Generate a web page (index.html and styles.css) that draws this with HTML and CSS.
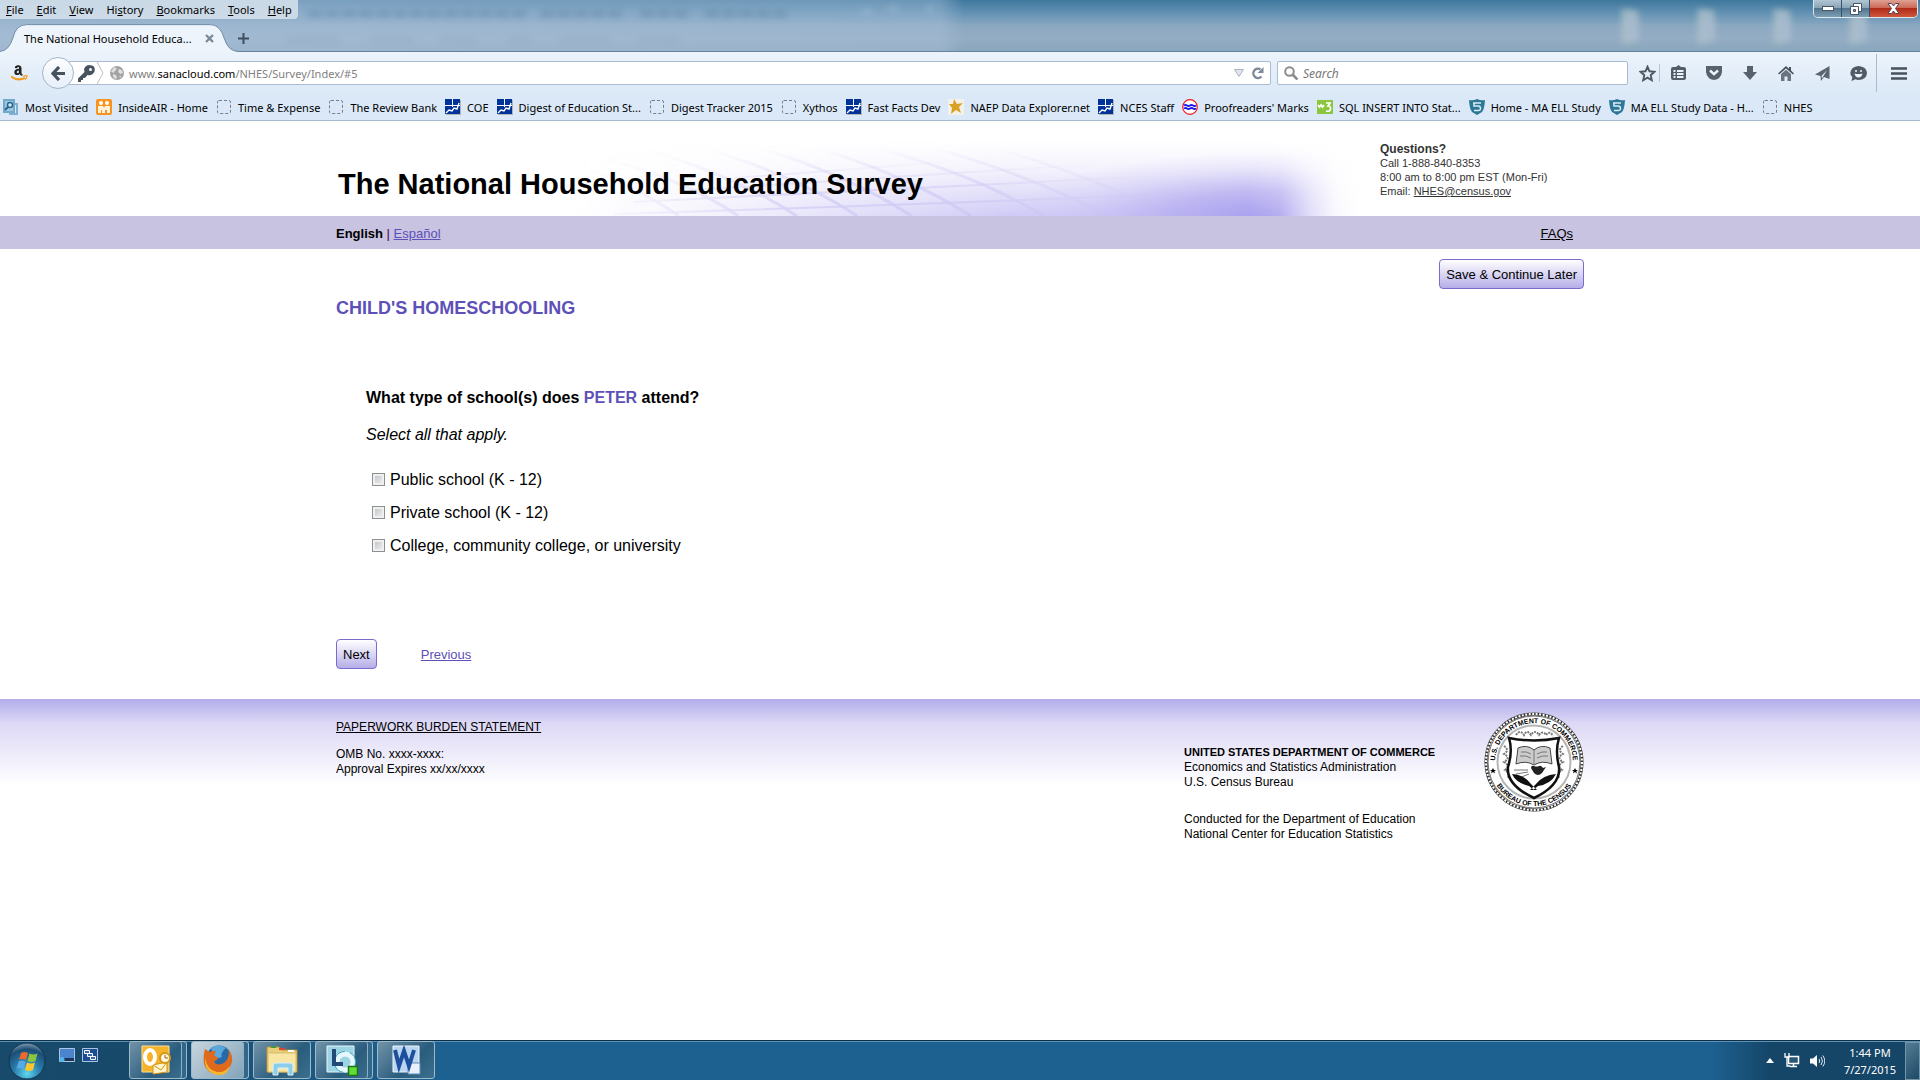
FILE: index.html
```html
<!DOCTYPE html>
<html lang="en">
<head>
  <meta charset="UTF-8" />
  <meta name="viewport" content="width=device-width, initial-scale=1" />
  <title>The National Household Education Survey</title>
  <link rel="stylesheet" href="styles.css">
</head>
<body>

<!-- Shared icons -->
<svg width="0" height="0" class="defs" aria-hidden="true">
  <symbol id="i-blank" viewBox="0 0 16 16"><rect x="1.5" y="1.5" width="13" height="13" rx="1.5" fill="none" stroke="#777f88" stroke-dasharray="3 2"/></symbol>
  <symbol id="i-chart" viewBox="0 0 16 16"><rect x="1" y="1" width="15" height="15" fill="#b4b4b4"/><rect width="15" height="15" fill="#003399"/><path d="M0 6.500h15M7.500 0v8" fill="none" stroke="#fff"/><path d="M1 14l3-3 3 1 2-3 3 1 2-6" fill="none" stroke="#fff" stroke-width="1.400"/></symbol>
  <symbol id="i-shield" viewBox="0 0 16 16"><path d="M0 1q4 1 8-1 4 2 8 1-.5 9-3 12l-5 3-5-3Q.5 10 0 1z" fill="#2f7797"/><path d="M4 4h8M5 4v3h4q2.500 0 2.500 2.300T9 11.500H5" fill="none" stroke="#d9edf5" stroke-width="1.500"/></symbol>
  <symbol id="i-folder" viewBox="0 0 28 40"><path d="M4 3l16 2v30L4 38z" fill="#b4c8c4"/><path d="M7 4l14 7v23L6 36z" fill="#adbfd0"/></symbol>
</svg>

<header class="browser">
  <div class="titlebar">
    <svg class="ghost-text" viewBox="0 0 960 50" aria-hidden="true">
      <path d="M308 14h220M540 14h85M640 14h50M705 14h85" stroke="#4c7292" stroke-width="7" stroke-dasharray="14 3"/>
      <path d="M286 40h54M370 40h44M440 40h36M508 40h24M560 40h50M640 40h40" stroke="#8da5b8" stroke-width="6"/>
      <path d="M862 12h10M888 9h10M926 9h8" stroke="#a9c4d8" stroke-width="8"/>
    </svg>
    <div class="ghost-folders" aria-hidden="true">
      <svg><use href="#i-folder"/></svg>
      <svg><use href="#i-folder"/></svg>
      <svg><use href="#i-folder"/></svg>
      <svg><use href="#i-folder"/></svg>
    </div>

    <nav class="menubar" aria-label="Menu bar">
      <button><u>F</u>ile</button>
      <button><u>E</u>dit</button>
      <button><u>V</u>iew</button>
      <button>Hi<u>s</u>tory</button>
      <button><u>B</u>ookmarks</button>
      <button><u>T</u>ools</button>
      <button><u>H</u>elp</button>
    </nav>

    <div class="tabs">
      <div class="tab">
        <svg class="tab-shape" viewBox="0 0 240 28" aria-hidden="true">
          <path d="M0 27.500Q9 27 13 14 16 .5 27 .5H212Q222 .5 226 14 230 27.500 240 27.500V28H0z" fill="#eef4fb"/>
          <path d="M0 27.500Q9 27 13 14 16 .5 27 .5H212Q222 .5 226 14 230 27.500 240 27.500" fill="none" stroke="#6f8ba6"/>
        </svg>
        <span class="tab-title">The National Household Educa...</span>
        <button class="tab-close" aria-label="Close tab"><svg width="9" height="9" viewBox="0 0 9 9"><path d="M1 1l7 7M8 1L1 8" stroke="#78899b" stroke-width="2.400"/></svg></button>
      </div>
      <button class="new-tab" aria-label="New tab"><svg width="11" height="11" viewBox="0 0 11 11"><path d="M5.500 0v11M0 5.500h11" stroke="#3e4f60" stroke-width="2"/></svg></button>
    </div>

    <div class="window-controls">
      <button class="win-min" aria-label="Minimize"><svg width="12" height="6" viewBox="0 0 12 6"><rect x=".5" y=".5" width="11" height="4" fill="#fff" stroke="#4a5566"/></svg></button>
      <button class="win-max" aria-label="Restore"><svg width="12" height="12" viewBox="0 0 12 12"><path d="M3.500.5h8v8h-8z" fill="#fff" stroke="#4a5566"/><path d="M.5 3.500h8v8h-8z" fill="#fff" stroke="#4a5566"/><path d="M3.500 6.500h2v2h-2z" fill="#7e98b0" stroke="#4a5566"/></svg></button>
      <button class="win-close" aria-label="Close"><svg width="13" height="11" viewBox="0 0 13 11"><path d="M1 .5h3.500l2 2.500 2-2.500H12L8.500 5.500l3.500 5H8.500l-2-2.500-2 2.500H1l3.500-5z" fill="#fff" stroke="#5a4650"/></svg></button>
    </div>
  </div>

  <div class="navbar">
    <a class="amazon" href="#" aria-label="Amazon">
      <svg width="18" height="18" viewBox="0 0 18 18"><path d="M12 11L10.500 9.500V4Q10 1 7 1.200 4 1.300 3.800 4l2.200.3Q6.500 2.800 7.500 3 8.500 3.200 8 4.800 3.300 5.200 3.300 8.300q.2 3 3 2.800 1.200 0 2.200-1.200l1.600 1.800zM8 6.500Q8 9.300 6.800 9.300 5.500 9 5.700 8q.1-1.400 2.300-1.500z" fill="#222"/><path d="M0 12.500q7 5 14 1.300" fill="none" stroke="#f39a1b" stroke-width="2"/><path d="M12 12.300q5-1.500 4 .5l-1.700 2.900" fill="none" stroke="#f39a1b" stroke-width="1.200"/></svg>
    </a>
    <button class="back" aria-label="Back"><svg width="14" height="15" viewBox="0 0 14 15"><path d="M8 1L2 7.500 8 14M2 7.500h12" fill="none" stroke="#46535f" stroke-width="3.200"/></svg></button>
    <div class="urlbar">
      <button class="identity" aria-label="Saved password">
        <svg width="17" height="17" viewBox="0 0 17 17"><path d="M10 0q-3 1-4 4l.5 3L0 13.500V17h3v-2h2v-2h2l2.500-3q5 1 7-3.500Q17.500 1.500 14 .5z" fill="#47535f"/><circle cx="12.500" cy="4.500" r="1.500" fill="#fff"/></svg>
      </button>
      <svg class="chevron" width="8" height="22" viewBox="0 0 8 22"><path d="M1 0l6 11-6 11" fill="none" stroke="#b9c2cc"/></svg>
      <svg class="globe" width="14" height="14" viewBox="0 0 14 14"><circle cx="7" cy="7" r="7" fill="#a2a2a2"/><path d="M4 1l3 1.500L5 5 3.500 7 1 5.500M9 3l3 1 1 3-2.500 1L8 6zM3 8l3 1 1 3-1.500 1L3 11zM9 10l2-.5L10.500 12" fill="#dedede"/></svg>
      <div class="url"><span>www.</span><b>sanacloud.com</b><span>/NHES/Survey/Index/#5</span></div>
      <button class="dropmark" aria-label="Show history"><svg width="10" height="8" viewBox="0 0 10 8"><path d="M.5.5h9L5 7.500z" fill="#e1e5ed" stroke="#aab2c0"/></svg></button>
      <button class="reload" aria-label="Reload"><svg width="13" height="13" viewBox="0 0 13 13"><path d="M9.500 2.300A4.700 4.700 0 1 0 10.500 9.500" fill="none" stroke="#7c8998" stroke-width="2.400"/><path d="M12.500 0v6H6.500z" fill="#7c8998"/></svg></button>
    </div>
    <div class="searchbar">
      <svg width="14" height="14" viewBox="0 0 14 14"><circle cx="5.500" cy="5.500" r="4.300" fill="none" stroke="#8c8c8c" stroke-width="2"/><path d="M8.500 8.500l5 5" stroke="#8c8c8c" stroke-width="2.600"/></svg>
      <input type="text" placeholder="Search" aria-label="Search">
    </div>
    <div class="tools">
      <button class="star" aria-label="Bookmark this page"><svg width="17" height="17" viewBox="0 0 17 17"><path d="M8.500 1.700l2 4.600 5 .5-3.800 3.400 1.100 5-4.300-2.600-4.300 2.600 1.100-5L1.500 6.800l5-.5z" fill="none" stroke="#4d5964" stroke-width="1.900"/></svg></button>
      <button aria-label="Bookmarks"><svg width="15" height="16" viewBox="0 0 15 16"><path d="M5 2L7.500 0 10 2h2.500Q15 2 15 4v9q0 2-2 2H2q-2 0-2-2V4q0-2 2-2z" fill="#515d69"/><path d="M2.500 5h2v2h-2zM6 5h6.500v2H6zM2.500 8h2v2h-2zM6 8h6.500v2H6zM2.500 11h2v2h-2zM6 11h6.500v2H6z" fill="#e9f1fa"/></svg></button>
      <button aria-label="Pocket"><svg width="16" height="14" viewBox="0 0 16 14"><path d="M0 0h16v6Q15 13 8 14 1 13 0 6z" fill="#56626e"/><path d="M4 4.500l4 3.700 4-3.700" fill="none" stroke="#eef4fb" stroke-width="2.400"/></svg></button>
      <button aria-label="Downloads"><svg width="14" height="14" viewBox="0 0 14 14"><path d="M4 0h6v6h4l-7 8-7-8h4z" fill="#56626e"/></svg></button>
      <button aria-label="Home"><svg width="16" height="15" viewBox="0 0 16 15"><path d="M8 0l3 2.700V1h2v3.500L16 7.500l-1 1L8 2.500 1 8.500l-1-1z" fill="#46525e"/><path d="M3 8l5-4.200L13 8v7H9.500v-4.500h-3V15H3z" fill="#697480"/></svg></button>
      <button aria-label="Send"><svg width="15" height="15" viewBox="0 0 15 15"><path d="M14.500 0v13L9 11 6 15 5.500 10 0 8.500zM12 4L6.500 10l.5 2.500" fill="#596571" fill-rule="evenodd"/></svg></button>
      <button aria-label="Hello"><svg width="17" height="15" viewBox="0 0 17 15"><path d="M8.500 0Q16.500.5 17 7q-.5 7-8.500 7-2 0-3-.7L1.500 15l.8-4Q.2 9.300.3 7 1 .5 8.500 0z" fill="#4f5b67"/><path d="M4.500 7.500q4 1.200 8 0-.8 4-4 4t-4-4z" fill="#eef4fb"/><circle cx="6" cy="5" r="1" fill="#eef4fb"/><circle cx="11" cy="5" r="1" fill="#eef4fb"/></svg></button>
      <button class="hamburger" aria-label="Open menu"><svg width="16" height="13" viewBox="0 0 16 13"><path d="M0 1.500h16M0 6.500h16M0 11.500h16" stroke="#46525e" stroke-width="2.600"/></svg></button>
    </div>
  </div>

  <nav class="bookmarks" aria-label="Bookmarks toolbar">
    <a href="#"><svg viewBox="0 0 16 16"><path d="M0 0h12v14H0z" fill="#6fa9cc"/><path d="M12 5h2v10H6" fill="none" stroke="#7fb0cf" stroke-width="2"/><path d="M2 2h8v10H2z" fill="#9fc8e0"/><circle cx="7" cy="6" r="2.500" fill="#d5ebf6" stroke="#28658f" stroke-width="1.500"/><path d="M5 8l-3 3" stroke="#28658f" stroke-width="2"/></svg>Most Visited</a>
    <a href="#"><svg viewBox="0 0 16 16"><rect width="16" height="16" rx="2" fill="#f7931e"/><circle cx="5" cy="4" r="2" fill="#fff"/><circle cx="11" cy="4" r="2" fill="#fff"/><path d="M2 7h5l1 2 1-2h5v7h-3v-3H9v3H6v-3H5v3H2z" fill="#fff3dc"/></svg>InsideAIR - Home</a>
    <a href="#"><svg><use href="#i-blank"/></svg>Time &amp; Expense</a>
    <a href="#"><svg><use href="#i-blank"/></svg>The Review Bank</a>
    <a href="#"><svg><use href="#i-chart"/></svg>COE</a>
    <a href="#"><svg><use href="#i-chart"/></svg>Digest of Education St...</a>
    <a href="#"><svg><use href="#i-blank"/></svg>Digest Tracker 2015</a>
    <a href="#"><svg><use href="#i-blank"/></svg>Xythos</a>
    <a href="#"><svg><use href="#i-chart"/></svg>Fast Facts Dev</a>
    <a href="#"><svg viewBox="0 0 16 16"><path d="M0 0h16v16H0z" fill="#f4f1ea"/><path d="M6 0l3 5 6-1-4 4 2 6-5-3-5 4 1-6-3-4h4z" fill="#d9a226"/></svg>NAEP Data Explorer.net</a>
    <a href="#"><svg><use href="#i-chart"/></svg>NCES Staff</a>
    <a href="#"><svg viewBox="0 0 16 16"><circle cx="8" cy="8" r="7.300" fill="#fff" stroke="#f01818" stroke-width="1.200"/><path d="M2 6.500q1.500-1 3 0t3 0 3 0 3 0M2 9.500q1.500-1 3 0t3 0 3 0 3 0" fill="none" stroke="#1717e8" stroke-width="2"/></svg>Proofreaders' Marks</a>
    <a href="#"><svg viewBox="0 0 16 16"><path d="M0 1h16v14H0z" fill="#8cc63f"/><path d="M1 6l1.500 2L4 6l1.500 2L7 6M9 4h4l-2 3q3 0 2.500 3T9 12" fill="none" stroke="#fff" stroke-width="1.700"/></svg>SQL INSERT INTO Stat...</a>
    <a href="#"><svg><use href="#i-shield"/></svg>Home - MA ELL Study</a>
    <a href="#"><svg><use href="#i-shield"/></svg>MA ELL Study Data - H...</a>
    <a href="#"><svg><use href="#i-blank"/></svg>NHES</a>
  </nav>
</header>

<div class="page">
  <header class="masthead">
    <div class="wrap masthead-inner">
      <svg class="banner" viewBox="0 0 780 76" preserveAspectRatio="none" aria-hidden="true">
        <defs>
          <linearGradient id="fade-x"><stop offset="0" stop-color="#fff" stop-opacity="0"/><stop offset=".15" stop-color="#fff" stop-opacity=".2"/><stop offset=".55" stop-color="#fff"/><stop offset=".86" stop-color="#fff"/><stop offset=".9" stop-color="#fff" stop-opacity=".85"/><stop offset=".94" stop-color="#fff" stop-opacity=".35"/><stop offset=".97" stop-color="#fff" stop-opacity=".08"/><stop offset="1" stop-color="#fff" stop-opacity="0"/></linearGradient>
          <linearGradient id="wash" x2="0" y2="1"><stop offset="0" stop-color="#b8b0f0" stop-opacity="0"/><stop offset=".35" stop-color="#b8b0f0" stop-opacity=".14"/><stop offset="1" stop-color="#b0a8f0" stop-opacity=".6"/></linearGradient>
          <radialGradient id="glow"><stop offset="0" stop-color="#a69dee"/><stop offset=".4" stop-color="#b4acf0" stop-opacity=".75"/><stop offset=".75" stop-color="#c4bdf4" stop-opacity=".25"/><stop offset="1" stop-color="#c8c2f5" stop-opacity="0"/></radialGradient>
          <linearGradient id="grid-x"><stop offset="0" stop-color="#fff" stop-opacity="0"/><stop offset=".3" stop-color="#fff" stop-opacity=".7"/><stop offset=".5" stop-color="#fff" stop-opacity=".7"/><stop offset=".75" stop-color="#fff" stop-opacity="0"/></linearGradient>
          <linearGradient id="grid-y" x2="0" y2="1"><stop offset=".1" stop-color="#c9c2f2" stop-opacity="0"/><stop offset=".7" stop-color="#c9c2f2" stop-opacity=".8"/></linearGradient>
          <mask id="fade"><rect width="780" height="76" fill="url(#fade-x)"/></mask>
          <mask id="grid-fade"><rect width="780" height="76" fill="url(#grid-x)"/></mask>
        </defs>
        <g mask="url(#fade)">
          <rect width="780" height="76" fill="url(#wash)"/>
          <ellipse cx="690" cy="78" rx="260" ry="66" fill="url(#glow)"/>
        </g>
        <g mask="url(#grid-fade)" fill="none" stroke="url(#grid-y)">
          <path stroke-width="2" d="M40 74Q300 66 600 54M60 62Q300 50 580 36M120 50Q300 38 520 24M160 38Q300 28 460 14"/>
          <path stroke-width="3" d="M105 76Q60 44 0 24M164 76Q112 40 30 18M222 76Q166 38 80 12M282 76Q222 36 130 8M336 76Q276 36 180 6M395 76Q330 34 230 4M467 76Q396 32 280 2M530 76Q450 32 330 0M592 76Q510 32 390 0"/>
        </g>
      </svg>
      <h1>The National Household Education Survey</h1>
      <address class="questions">
        <strong>Questions?</strong><br>
        Call 1-888-840-8353<br>
        8:00 am to 8:00 pm EST (Mon-Fri)<br>
        Email: <a href="mailto:NHES@census.gov">NHES@census.gov</a>
      </address>
    </div>
  </header>

  <div class="langbar">
    <div class="wrap langbar-inner">
      <div><b>English</b> <span class="pipe">|</span> <a href="#">Español</a></div>
      <a class="faqs" href="#">FAQs</a>
    </div>
  </div>

  <form class="wrap survey">
    <div class="save-row"><button type="button" class="btn">Save &amp; Continue Later</button></div>
    <h2>CHILD'S HOMESCHOOLING</h2>
    <fieldset>
      <legend>What type of school(s) does <span class="name">PETER</span> attend?</legend>
      <p class="hint">Select all that apply.</p>
      <div class="option"><input type="checkbox" id="public"><label for="public">Public school (K - 12)</label></div>
      <div class="option"><input type="checkbox" id="private"><label for="private">Private school (K - 12)</label></div>
      <div class="option"><input type="checkbox" id="college"><label for="college">College, community college, or university</label></div>
    </fieldset>
    <div class="actions">
      <button type="button" class="btn">Next</button>
      <a href="#">Previous</a>
    </div>
  </form>

  <footer class="site-footer">
    <div class="wrap footer-inner">
      <div class="footer-left">
        <a href="#">PAPERWORK BURDEN STATEMENT</a>
        <p>OMB No. xxxx-xxxx:<br>Approval Expires xx/xx/xxxx</p>
      </div>
      <div class="footer-right">
        <p><strong>UNITED STATES DEPARTMENT OF COMMERCE</strong><br>Economics and Statistics Administration<br>U.S. Census Bureau</p>
        <p>Conducted for the Department of Education<br>National Center for Education Statistics</p>
      </div>
      <svg class="seal" width="100" height="100" viewBox="0 0 100 100" role="img" aria-label="U.S. Department of Commerce, Bureau of the Census">
        <defs>
          <path id="arc-top" d="M14.500 66A38.900 38.900 0 1 1 85.500 66"/>
          <path id="arc-bottom" d="M7 61A44.500 44.500 0 0 0 93 61"/>
        </defs>
        <circle cx="50" cy="50" r="49.500" fill="#fff"/>
        <circle cx="50" cy="50" r="48" fill="none" stroke="#333" stroke-width="3"/>
        <circle cx="50" cy="50" r="48" fill="none" stroke="#fff" stroke-width="2" stroke-dasharray="2 1.500"/>
        <circle cx="50" cy="50" r="46" fill="none" stroke="#333" stroke-width=".7"/>
        <circle cx="50" cy="50" r="36.500" fill="#fff" stroke="#b5b5b5" stroke-width="2"/>
        <text class="seal-text"><textPath href="#arc-top" startOffset="50%" text-anchor="middle">U.S. DEPARTMENT OF COMMERCE</textPath></text>
        <text class="seal-text"><textPath href="#arc-bottom" startOffset="50%" text-anchor="middle">BUREAU OF THE CENSUS</textPath></text>
        <path d="M9 56l1 2h2l-1.700 1.300.7 2.200-2-1.400-2 1.400.7-2.200L6 58h2zM91 56l1 2h2l-1.700 1.300.7 2.200-2-1.400-2 1.400.7-2.200L88 58h2z"/>
        <path d="M32 23q4-6 8 0 3-6 7 0 4-6 8 0 4-5 7 0 4-5 7 1" fill="none" stroke="#777" stroke-width="2" stroke-dasharray="2 1"/>
        <path d="M20 34q6 4 0 8 7 4 0 8 7 4 1 8 5 3 3 8M79 34q-6 4 0 8-7 4 0 8-7 4-1 8-5 3-3 8" fill="none" stroke="#777" stroke-width="2" stroke-dasharray="2 1"/>
        <path d="M25 26q25 5 50 0-4 13 0 29 2 18-25 31Q22 73 24 55q5-16 1-29z" fill="#fff" stroke="#111" stroke-width="2.500"/>
        <path d="M34 36q9-4 16 2 7-6 16-2l2 16q-10-4-18 1-8-5-18-1z" fill="#ccc" stroke="#444"/>
        <path d="M50 38v15M37 40q6-1 10 2M36 44q6-1 11 2M53 42q5-3 10-2M53 46q5-3 11-2M30 58h14M32 62l12-2M35 66l10-4" fill="none" stroke="#777"/>
        <path d="M28 62q13 1 19 10l6 6h-3l-5-4Q32 71 28 62zM72 62Q59 63 52 72l-6 6h3l5-4q13-2 18-12z" fill="#111"/>
        <path d="M47 56q0-3 3-2t5 0 4 2l3-1-4 6q-4 4-8 0z" fill="#222"/>
      </svg>
    </div>
  </footer>
</div>

<div class="taskbar">
  <button class="start" aria-label="Start">
    <svg width="40" height="38" viewBox="0 0 40 38">
      <defs><radialGradient id="orb" cy=".85" r=".9"><stop offset="0" stop-color="#5fd5ee"/><stop offset=".4" stop-color="#2a7fae"/><stop offset=".75" stop-color="#1c4d74"/><stop offset="1" stop-color="#9bb4c4"/></radialGradient></defs>
      <circle cx="20" cy="19" r="18" fill="url(#orb)" stroke="#12364f"/>
      <path d="M14 11q3-2 7 0l-2 7q-4-2-7 0z" fill="#ec6a2c"/>
      <path d="M22.500 11.500q4 2 8 0l-2 7.500q-4 2-8 0z" fill="#8cc63e"/>
      <path d="M11.500 19.500q3-2 7 0l-2 7.500q-4-2-7 0z" fill="#5aa8e4"/>
      <path d="M20 20.500q4 2 8 0l-2 7.500q-4 2-8 0z" fill="#fbc62e"/>
    </svg>
  </button>
  <div class="quick">
    <button aria-label="Show desktop"><svg width="16" height="15" viewBox="0 0 16 15"><path d="M.5.5h15v13H.5z" fill="#4b83cd" stroke="#a8c6e3"/><path d="M1 10h14v3H1z" fill="#1d3556"/><circle cx="3" cy="11.500" r="2.500" fill="#54b5ea"/></svg></button>
    <button aria-label="Switch windows"><svg width="16" height="14" viewBox="0 0 16 14"><path d="M.5.5h15v13H.5z" fill="#1d4c93" stroke="#a8c6e3"/><path d="M2.500 2.500h5v3h-5zM5.500 5.500h5v3h-5zM8.500 8.500h5v3h-5z" fill="#3a68aa" stroke="#fff"/></svg></button>
  </div>
  <div class="apps">
    <button class="app stacked" aria-label="Outlook">
      <svg width="32" height="32" viewBox="0 0 32 32"><path d="M2 2h27v26H2z" fill="#f4b32a" stroke="#fce29b"/><path d="M13 21l14-3v10l-14 2z" fill="#fff4cf" stroke="#d69613"/><path d="M13 21l8 5 6-8" fill="none" stroke="#d69613"/><ellipse cx="10" cy="13" rx="5" ry="7" fill="none" stroke="#fff" stroke-width="4"/><circle cx="25" cy="14" r="5" fill="#fff8e2" stroke="#d69613" stroke-width="2"/><path d="M25 11v3h3" fill="none" stroke="#93650b"/></svg>
    </button>
    <button class="app stacked active" aria-label="Firefox">
      <svg width="32" height="32" viewBox="0 0 32 32"><circle cx="17" cy="14" r="12.500" fill="#266aa8"/><path d="M9 4q8-5 15 0-6 5-4 9l-7 2z" fill="#59a9dc"/><path d="M3 5q3 2 5 3 3-2 6-1l-2 4 4 3q-1 3-4 3 2 5 7 3 4-1 6-4 3-6 1-11 5 6 4 13-3 11-13 12Q5 30 2 20 1 11 3 5z" fill="#e06a1c"/><path d="M3 14q2 12 12 14 9 1 13-7-2 11-13 10Q2 28 3 14z" fill="#f8b62c"/></svg>
    </button>
    <button class="app" aria-label="Explorer">
      <svg width="32" height="32" viewBox="0 0 32 32"><path d="M1 3h12l2 3h16v22H1z" fill="#e8cd7a" stroke="#b89134"/><path d="M5 2h5v2H5z" fill="#3f9a42"/><path d="M13 4h6v2h-6z" fill="#d9472f"/><path d="M22 6h6v2h-6z" fill="#fff"/><path d="M2 9h28v19H2z" fill="#f8e6a4" stroke="#d9bb66"/><path d="M7 31v-9q0-3 3-3h14q3 0 3 3v9h-5v-7H12v7z" fill="#8ccdec" stroke="#d7f1fb"/></svg>
    </button>
    <button class="app stacked" aria-label="Lync">
      <svg width="32" height="32" viewBox="0 0 32 32"><path d="M1 2h27v26H1z" fill="#9cd4e4" stroke="#e5f7fb"/><circle cx="19" cy="18" r="8" fill="none" stroke="#e6f8fc" stroke-width="5"/><circle cx="19" cy="18" r="10.500" fill="none" stroke="#3aa5c7" stroke-dasharray="13 5"/><path d="M6 5h4v13h7v4H6z" fill="#234978"/><path d="M22.500 22.500h9v9h-9z" fill="#62dd35" stroke="#1b7218" stroke-width="1.500"/></svg>
    </button>
    <button class="app" aria-label="Word">
      <svg width="32" height="32" viewBox="0 0 32 32"><path d="M3 2h26v26H3z" fill="#b9d5ef" stroke="#edf6fd"/><path d="M18 19h12v11H18z" fill="#e8f1fb" stroke="#6289bd"/><path d="M5 6l4 16 5-15 5 15 5-16" fill="none" stroke="#1d4f9e" stroke-width="4"/></svg>
    </button>
  </div>
  <div class="tray">
    <button aria-label="Show hidden icons"><svg width="8" height="5" viewBox="0 0 8 5"><path d="M4 0l4 5H0z" fill="#fff"/></svg></button>
    <button aria-label="Network"><svg width="16" height="15" viewBox="0 0 16 15"><path d="M4.500 3.500h10v7h-10z" fill="#295778" stroke="#fff" stroke-width="1.500"/><path d="M6 13.500h7M9.500 11v3" stroke="#fff" stroke-width="1.500"/><path d="M1 0v4h4V0M3 4v9h3" fill="none" stroke="#fff" stroke-width="1.300"/></svg></button>
    <button aria-label="Volume"><svg width="15" height="14" viewBox="0 0 15 14"><path d="M0 4.500h3L7 1v12L3 9.500H0z" fill="#fff"/><path d="M9 5q1.500 2 0 4M11 3q3 4 0 8M12.800 1.500q4 5.500 0 11" fill="none" stroke="#dde8f0"/></svg></button>
    <div class="clock">1:44 PM<br>7/27/2015</div>
    <button class="peek" aria-label="Show desktop"></button>
  </div>
</div>

</body>
</html>
```
FILE: styles.css
```css
* {
  box-sizing: border-box;
}

body {
  margin: 0;
  height: 100vh;
  display: flex;
  flex-direction: column;
  overflow: hidden;
  background: #fff;
  color: #000;
  font-family: "Liberation Sans", Arial, sans-serif;
  font-size: 13px;
}

button {
  font: inherit;
  color: inherit;
  border: 0;
  padding: 0;
  background: none;
}

svg {
  display: block;
  flex: none;
}

.defs {
  position: absolute;
}

/* Browser window */
.browser,
.taskbar {
  flex: none;
  font-family: "Noto Sans", "Open Sans", sans-serif;
  font-size: 11px;
}

.titlebar {
  position: relative;
  height: 52px;
  background:
    linear-gradient(to right, #adc3dc99 0, #adc3dc66 940px, transparent 964px),
    linear-gradient(#3f779d, #6090b2 12px, #8ba8c1 26px, #94adc4 38px, #88a6bd);
  border-bottom: 1px solid #63839f;
}

.ghost-text {
  position: absolute;
  left: 0;
  top: 0;
  width: 960px;
  height: 50px;
  opacity: 0.3;
  filter: blur(3px);
}

.ghost-folders {
  position: absolute;
  right: 46px;
  top: 6px;
  display: flex;
  gap: 48px;
  opacity: 0.8;
  filter: blur(3px);
}

.ghost-folders svg {
  width: 28px;
  height: 40px;
}

.menubar {
  position: relative;
  display: flex;
  gap: 13px;
  width: max-content;
  height: 19px;
  padding: 0 6px;
  align-items: center;
  background: #d6e1ebdd;
  border-radius: 0 0 4px 0;
}

.tabs {
  position: relative;
  display: flex;
  align-items: center;
  height: 33px;
  padding-top: 5px;
}

.tab {
  position: relative;
  display: flex;
  align-items: center;
  justify-content: space-between;
  width: 238px;
  height: 28px;
  padding: 0 24px;
}

.tab-shape {
  position: absolute;
  inset: 0;
  width: 100%;
  height: 100%;
}

.tab-title,
.tab-close {
  position: relative;
}

.window-controls {
  position: absolute;
  top: 0;
  right: 2px;
  display: flex;
  height: 18px;
  border: 1px solid #dce8f0;
  border-top: 0;
  border-radius: 0 0 5px 5px;
  overflow: hidden;
}

.window-controls button {
  display: flex;
  align-items: center;
  justify-content: center;
  width: 28px;
  background: linear-gradient(#b2c6d4, #8aa5b8 45%, #52748e 50%, #7da0b5);
  border-right: 1px solid #33536b;
}

.window-controls .win-close {
  width: 47px;
  border: 0;
  background: linear-gradient(#e0a193, #cc6a57 45%, #b02c17 50%, #d1573c);
}

.navbar {
  display: flex;
  align-items: center;
  height: 42px;
  padding-left: 11px;
  background: linear-gradient(#ecf3fb, #dce9f7);
}

.back {
  position: relative;
  z-index: 1;
  display: flex;
  align-items: center;
  justify-content: center;
  flex: none;
  width: 32px;
  height: 32px;
  margin: 0 -6px 0 13px;
  border: 1px solid #a3b6cb;
  border-radius: 50%;
  background: linear-gradient(#fdfeff, #e6eff9);
}

.urlbar,
.searchbar {
  display: flex;
  align-items: center;
  height: 24px;
  border: 1px solid #a8bbd0;
  border-radius: 2px;
  background: #fff;
}

.urlbar {
  flex: 1;
  padding: 0 6px 0 9px;
}

.chevron {
  margin: 0 6px 0 1px;
}

.url {
  flex: 1;
  margin-left: 5px;
  color: #808080;
}

.url b {
  font-weight: 400;
  color: #000;
}

.dropmark {
  margin-right: 7px;
}

.searchbar {
  width: 351px;
  gap: 5px;
  margin-left: 6px;
  padding-left: 6px;
}

.searchbar input {
  flex: 1;
  border: 0;
  padding: 0;
  font: italic 12px "Noto Sans", sans-serif;
  background: none;
}

.searchbar input::placeholder {
  color: #777;
}

.tools {
  display: flex;
  align-items: center;
  padding-left: 8px;
}

.tools button {
  display: flex;
  align-items: center;
  justify-content: center;
  width: 36px;
  height: 18px;
}

.tools .star {
  width: 24px;
  border-right: 1px solid #b3c5d9;
}

.tools .hamburger {
  width: 44px;
  height: 38px;
  border-left: 1px solid #a9bacb;
}

.bookmarks {
  display: flex;
  align-items: center;
  gap: 8px;
  height: 27px;
  padding: 0 3px;
  background: #dae8f7;
  border-bottom: 1px solid #a5b9d1;
}

.bookmarks a {
  display: flex;
  align-items: center;
  gap: 6px;
  color: #000;
  text-decoration: none;
  white-space: nowrap;
}

.bookmarks svg {
  width: 16px;
  height: 16px;
}

/* Survey page */
.page {
  flex: 1;
  overflow: auto;
}

.page a {
  color: #5d50b8;
}

.wrap {
  width: 65%;
  margin: 0 auto;
}

.masthead-inner {
  position: relative;
  display: flex;
  justify-content: space-between;
  height: 95px;
}

.banner {
  position: absolute;
  left: 19%;
  bottom: 0;
  width: 63%;
  height: 76px;
}

h1 {
  position: relative;
  margin: 46px 0 0 2px;
  font-size: 29px;
  line-height: 34px;
}

.questions {
  position: relative;
  width: 204px;
  margin-top: 21px;
  font-size: 11px;
  font-style: normal;
  line-height: 14px;
  color: #333;
}

.questions strong {
  font-size: 12px;
}

.page .questions a,
.page .faqs,
.page .footer-left a {
  color: inherit;
}

.langbar {
  background: #c7c3e1;
}

.langbar-inner {
  display: flex;
  align-items: center;
  justify-content: space-between;
  height: 33px;
  padding: 2px 11px 0 0;
}

.pipe {
  color: #500050;
}

.survey {
  padding-top: 10px;
}

.save-row {
  display: flex;
  justify-content: flex-end;
}

.btn {
  height: 30px;
  padding: 0 6px;
  border: 1px solid #7b6bd0;
  border-radius: 4px;
  background: linear-gradient(#fff, #b5aee8);
}

h2 {
  margin: 8px 0 0;
  font-size: 18px;
  line-height: 22px;
  color: #5d50b8;
}

fieldset {
  margin: 69px 0 0;
  padding: 0 0 0 30px;
  border: 0;
  font-size: 16px;
  line-height: 20px;
}

legend {
  padding: 0;
  font-weight: bold;
}

.name {
  color: #5d50b8;
}

.hint {
  margin: 17px 0 18px;
  font-style: italic;
}

.option {
  display: flex;
  align-items: center;
  gap: 5px;
  height: 33px;
  padding-left: 6px;
}

.option input {
  appearance: none;
  width: 13px;
  height: 13px;
  margin: 0;
  border: 1px solid #8e8f8f;
  background: linear-gradient(135deg, #b9bfc7, #f4f4f4);
  box-shadow: inset 0 0 0 2px #f0f0f0;
}

.actions {
  display: flex;
  align-items: center;
  gap: 44px;
  margin: 77px 0 30px;
}

.site-footer {
  background: linear-gradient(#b2adea, #dcd8f5 24px, #fff 86px);
}

.footer-inner {
  display: flex;
  font-size: 12px;
  line-height: 15px;
}

.footer-left {
  flex: 1;
  padding-top: 21px;
}

.footer-left p {
  margin: 12px 0 0;
}

.footer-right {
  width: 300px;
  padding-top: 46px;
}

.footer-right p {
  margin: 0 0 22px;
}

.footer-right strong {
  font-size: 11px;
}

.seal {
  margin-top: 13px;
}

.seal-text {
  font-family: "Liberation Sans", Arial, sans-serif;
  font-size: 7px;
  font-weight: bold;
}

/* Taskbar */
.taskbar {
  display: flex;
  height: 40px;
  border-top: 1px solid #0e3048;
  box-shadow: inset 0 1px #5f93b5;
  background: linear-gradient(to right, #174a6b 0, #17496b 120px, #1d6191 440px, #1d6191 calc(100% - 210px), #154668 calc(100% - 150px));
  color: #fff;
}

.start {
  width: 54px;
  display: grid;
  place-items: center;
}

.quick {
  display: flex;
  gap: 7px;
  width: 75px;
  padding: 7px 0 0 5px;
  align-items: flex-start;
}

.apps {
  display: flex;
  gap: 4px;
  flex: 1;
}

.app {
  display: grid;
  place-items: center;
  width: 58px;
  height: 38px;
  border: 1px solid #9dbacb;
  border-radius: 3px;
  background: linear-gradient(135deg, #7193a8, #2a5c7d 60%, #3d6f8e);
}

.stacked {
  padding-right: 5px;
  box-shadow: inset -4px 0 #32678a, inset -5px 0 #8fb0c4;
}

.active {
  background: linear-gradient(135deg, #c7d5de, #7fa1b7);
}

.tray {
  display: flex;
  align-items: center;
  gap: 10px;
}

.clock {
  width: 70px;
  line-height: 17px;
  text-align: center;
}

.peek {
  width: 15px;
  height: 38px;
  margin-left: -10px;
  border: 1px solid #7295aa;
  background: linear-gradient(135deg, #557c94, #1b4966);
}
```
